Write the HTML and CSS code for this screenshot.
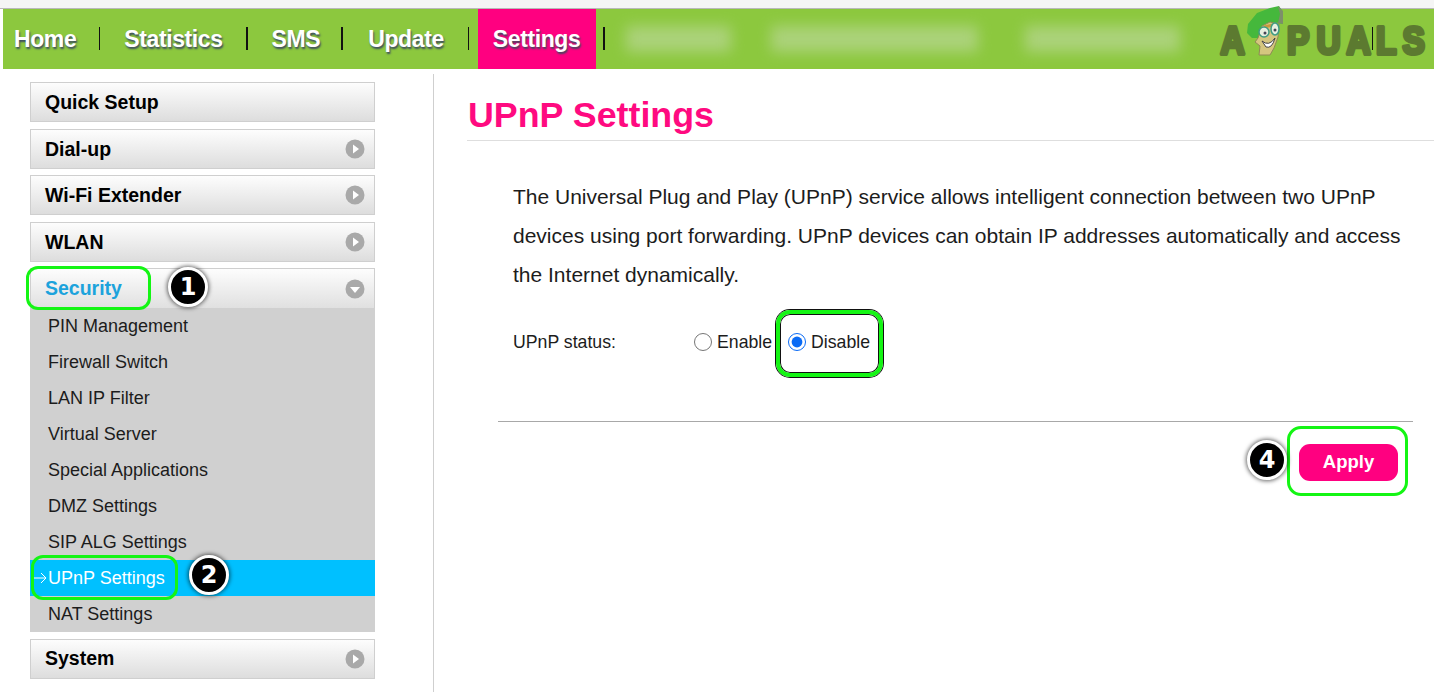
FILE: index.html
```html
<!DOCTYPE html>
<html lang="en">
<head>
<meta charset="utf-8">
<title>UPnP Settings</title>
<link rel="stylesheet" href="styles.css">
</head>
<body>
<div class="page">
  <div class="strip"></div>
  <nav class="nav">
    <a class="nav-item first">Home</a><i class="sep"></i>
    <a class="nav-item">Statistics</a><i class="sep thick"></i>
    <a class="nav-item tight">SMS</a><i class="sep thick"></i>
    <a class="nav-item loose">Update</a><i class="sep"></i>
    <a class="nav-item active">Settings</a><i class="sep thick gap"></i>
    <div class="blur b1"></div>
    <div class="blur b2"></div>
    <div class="blur b3"></div>
    <svg class="logo" viewBox="0 0 224 69" width="224" height="69" aria-label="Appuals">
      <text class="logo-text" transform="scale(.88 1)" y="54" x="11.9 87.5 121 155 188.6 218.7">APUALS</text>
      <path d="M37 33 L38 24 L47 13 L60 8 L69 6 L73 12 L73 24 L60 22 L52 26 L48 38 L42 38 Z" fill="#45b83c"/>
      <path d="M68 6 L73 11 L73 24 L68 23 L70 14 Z" fill="#7d8f6a"/>
      <path d="M48 38 L52 26 L60 22 L69 24 L68 37 L64 48 L60 55 L49 55 L50 46 L45 42 Z" fill="#d5c67f" stroke="#8f8a55" stroke-width="1"/>
      <path d="M54 27 L68 24" stroke="#c99a3c" stroke-width="3"/>
      <ellipse cx="54" cy="32" rx="5" ry="5" fill="#e8efe0" stroke="#3f9c84" stroke-width="1.5"/>
      <ellipse cx="65" cy="29" rx="4" ry="6" fill="#e8efe0" stroke="#3f9c84" stroke-width="1.5"/>
      <circle cx="55" cy="33" r="1.5" fill="#445"/>
      <circle cx="65" cy="30" r="1.5" fill="#445"/>
      <path d="M52 41 Q59 47 65 38 Q62 49 56 47 Z" fill="#fff" stroke="#444" stroke-width="1"/>
    </svg>
    <i class="sep over"></i>
  </nav>
  <div class="layout">
    <aside class="sidebar">
      <div class="menu-btn">Quick Setup</div>
      <div class="menu-btn">Dial-up
        <svg class="chev" viewBox="0 0 20 20" width="20" height="20"><circle cx="10" cy="10" r="9.5" fill="#a9a9a9"/><path d="M8 5.5 L14 10 L8 14.5 Z" fill="#fff"/></svg>
      </div>
      <div class="menu-btn">Wi-Fi Extender
        <svg class="chev" viewBox="0 0 20 20" width="20" height="20"><circle cx="10" cy="10" r="9.5" fill="#a9a9a9"/><path d="M8 5.5 L14 10 L8 14.5 Z" fill="#fff"/></svg>
      </div>
      <div class="menu-btn">WLAN
        <svg class="chev" viewBox="0 0 20 20" width="20" height="20"><circle cx="10" cy="10" r="9.5" fill="#a9a9a9"/><path d="M8 5.5 L14 10 L8 14.5 Z" fill="#fff"/></svg>
      </div>
      <div class="group">
        <div class="menu-btn open">Security
          <svg class="chev" viewBox="0 0 20 20" width="20" height="20"><circle cx="10" cy="10" r="9.5" fill="#a9a9a9"/><path d="M5 8 L15 8 L10 14 Z" fill="#fff"/></svg>
        </div>
        <ul class="submenu">
          <li>PIN Management</li>
          <li>Firewall Switch</li>
          <li>LAN IP Filter</li>
          <li>Virtual Server</li>
          <li>Special Applications</li>
          <li>DMZ Settings</li>
          <li>SIP ALG Settings</li>
          <li class="current">
            <svg class="arrow" viewBox="0 0 14 12" width="14" height="12"><path d="M0 6 H13 M8 1 L13 6 L8 11" fill="none" stroke="#fff" stroke-width="1"/></svg>
            UPnP Settings
          </li>
          <li>NAT Settings</li>
        </ul>
      </div>
      <div class="menu-btn system">System
        <svg class="chev" viewBox="0 0 20 20" width="20" height="20"><circle cx="10" cy="10" r="9.5" fill="#a9a9a9"/><path d="M8 5.5 L14 10 L8 14.5 Z" fill="#fff"/></svg>
      </div>
    </aside>
    <main class="main">
      <h1 class="title">UPnP Settings</h1>
      <p class="intro">The Universal Plug and Play (UPnP) service allows intelligent connection between two UPnP devices using port forwarding. UPnP devices can obtain IP addresses automatically and access the Internet dynamically.</p>
      <div class="status">
        <span class="status-label">UPnP status:</span>
        <label class="radio"><input type="radio" name="upnp">Enable</label>
        <label class="radio"><input type="radio" name="upnp" checked>Disable</label>
      </div>
      <div class="actions">
        <button class="apply" type="button">Apply</button>
      </div>
    </main>
  </div>
  <div class="mark box-security"></div>
  <div class="mark box-upnp"></div>
  <div class="mark box-disable"></div>
  <div class="mark box-apply"></div>
  <div class="badge badge-1">1</div>
  <div class="badge badge-2">2</div>
  <div class="badge badge-4">4</div>
</div>
</body>
</html>
```
FILE: styles.css
```css
* { box-sizing: border-box; }
html, body { margin: 0; padding: 0; background: #fff; }
body { font-family: "Liberation Sans", Arial, sans-serif; color: #1c1c1c; }
.page { position: relative; width: 1434px; height: 692px; overflow: hidden; }

.strip { height: 9px; background: #f5f5f5; border-bottom: 1px solid #b9b9b9; }

.nav {
  position: relative;
  display: flex;
  align-items: center;
  height: 60px;
  margin-left: 3px;
  background: #8cc83e;
}
.nav-item {
  padding: 0 23px 0 24px;
  color: #fff;
  font-size: 23px;
  letter-spacing: -.4px;
  font-weight: 700;
  line-height: 60px;
  text-shadow: 1px 2px 2px #3c4a5e;
}
.nav-item.first { padding-left: 11px; }
.nav-item.tight { padding-right: 21px; }
.nav-item.loose { padding: 0 24px 0 25px; }
.nav-item.active { margin-left: 9px; padding: 0 16px 0 15px; background: #ff0080; }
.sep { flex: none; width: 1px; height: 23px; margin-top: -2px; background: #111; }
.sep.thick { width: 2px; }
.sep.gap { margin-left: 7px; }
.sep.over { position: absolute; left: 1369px; top: 18px; margin: 0; }

.blur { flex: none; height: 26px; background: #bcd89a; filter: blur(7px); opacity: .65; }
.b1 { width: 105px; margin-left: 21px; }
.b2 { width: 207px; margin-left: 40px; }
.b3 { width: 155px; margin-left: 47px; }

.logo { position: absolute; right: 0; top: -9px; overflow: visible; }
.logo-text {
  font-family: "Liberation Sans", Arial, sans-serif;
  font-size: 38px;
  font-weight: 700;
  fill: #5c7a30;
  stroke: #5c7a30;
  stroke-width: 4px;
  stroke-linejoin: round;
}

.layout { display: flex; height: 623px; }
.sidebar {
  display: flex;
  flex-direction: column;
  flex: none;
  width: 345px;
  margin-left: 30px;
  padding-top: 13px;
}
.sidebar > * + * { margin-top: 6px; }
.sidebar > :nth-child(even) { margin-top: 7px; }
.menu-btn {
  display: flex;
  align-items: center;
  justify-content: space-between;
  height: 40px;
  padding: 0 9px 0 14px;
  border: 1px solid #cfcfcf;
  background: linear-gradient(#fdfdfd, #dddddd);
  color: #000;
  font-size: 19.5px;
  font-weight: 700;
}
.menu-btn.open { color: #1ca3dc; border-bottom: 0; background: linear-gradient(#fdfdfd, #e0e0e0); }
.menu-btn.system { padding-bottom: 1px; }
.submenu { margin: 0; padding: 0; list-style: none; background: #d0d0d0; }
.submenu li {
  display: flex;
  align-items: center;
  height: 36px;
  padding-left: 18px;
  font-size: 18px;
  color: #1c1c1c;
}
.submenu li.current { position: relative; background: #00c0ff; color: #fff; }
.arrow { position: absolute; left: 3px; top: 12px; }

.main {
  flex: none;
  width: 1001px;
  margin-left: 58px;
  margin-top: 5px;
  border-left: 1px solid #cfcfcf;
}
.title {
  margin: 0 0 0 33px;
  height: 67px;
  padding: 19px 0 0 1px;
  border-bottom: 1px solid #dedede;
  color: #ff0a80;
  font-size: 35.8px;
  line-height: 44px;
  font-weight: 700;
}
.intro {
  width: 895px;
  margin: 36px 0 0 79px;
  font-size: 21px;
  line-height: 39px;
  color: #1c1c1c;
}
.status {
  display: flex;
  align-items: center;
  height: 30px;
  margin: 33px 0 0 79px;
  font-size: 17.7px;
}
.status-label { width: 181px; }
.radio { display: flex; align-items: center; margin-right: 16px; }
.radio input {
  width: 18px;
  height: 18px;
  margin: 0 5px 0 0;
  accent-color: #0b6bf5;
}
.actions {
  display: flex;
  justify-content: flex-end;
  width: 915px;
  margin: 64px 0 0 64px;
  padding: 22px 15px 0 0;
  border-top: 1px solid #a8a8a8;
}
.apply {
  width: 99px;
  height: 37px;
  padding: 0 0 2px;
  border: 0;
  border-radius: 11px;
  background: #ff0080;
  color: #fff;
  font: 700 18.5px "Liberation Sans", Arial, sans-serif;
}

.mark { position: absolute; border: 3px solid #14f514; border-radius: 12px; }
.box-security { left: 26px; top: 266px; width: 125px; height: 44px; }
.box-upnp { left: 31px; top: 555px; width: 147px; height: 45px; }
.box-disable {
  left: 776px; top: 310px; width: 107px; height: 67px;
  border: 4px solid #14f514;
  border-radius: 14px;
  box-shadow: 0 0 0 1px #111, inset 0 0 0 1px #111;
}
.box-apply { left: 1287px; top: 426px; width: 121px; height: 70px; border-radius: 14px; }

.badge {
  position: absolute;
  display: flex;
  align-items: center;
  justify-content: center;
  width: 40px;
  height: 40px;
  border: 3px solid #fff;
  border-radius: 50%;
  background: #000;
  box-shadow: 0 0 4px 1px rgba(0, 0, 0, .6);
  color: #fff;
  font-family: "DejaVu Sans", sans-serif;
  font-size: 24px;
  font-weight: 700;
}
.badge-1 { left: 168px; top: 267px; }
.badge-2 { left: 189px; top: 555px; }
.badge-4 { left: 1247px; top: 440px; }
```
